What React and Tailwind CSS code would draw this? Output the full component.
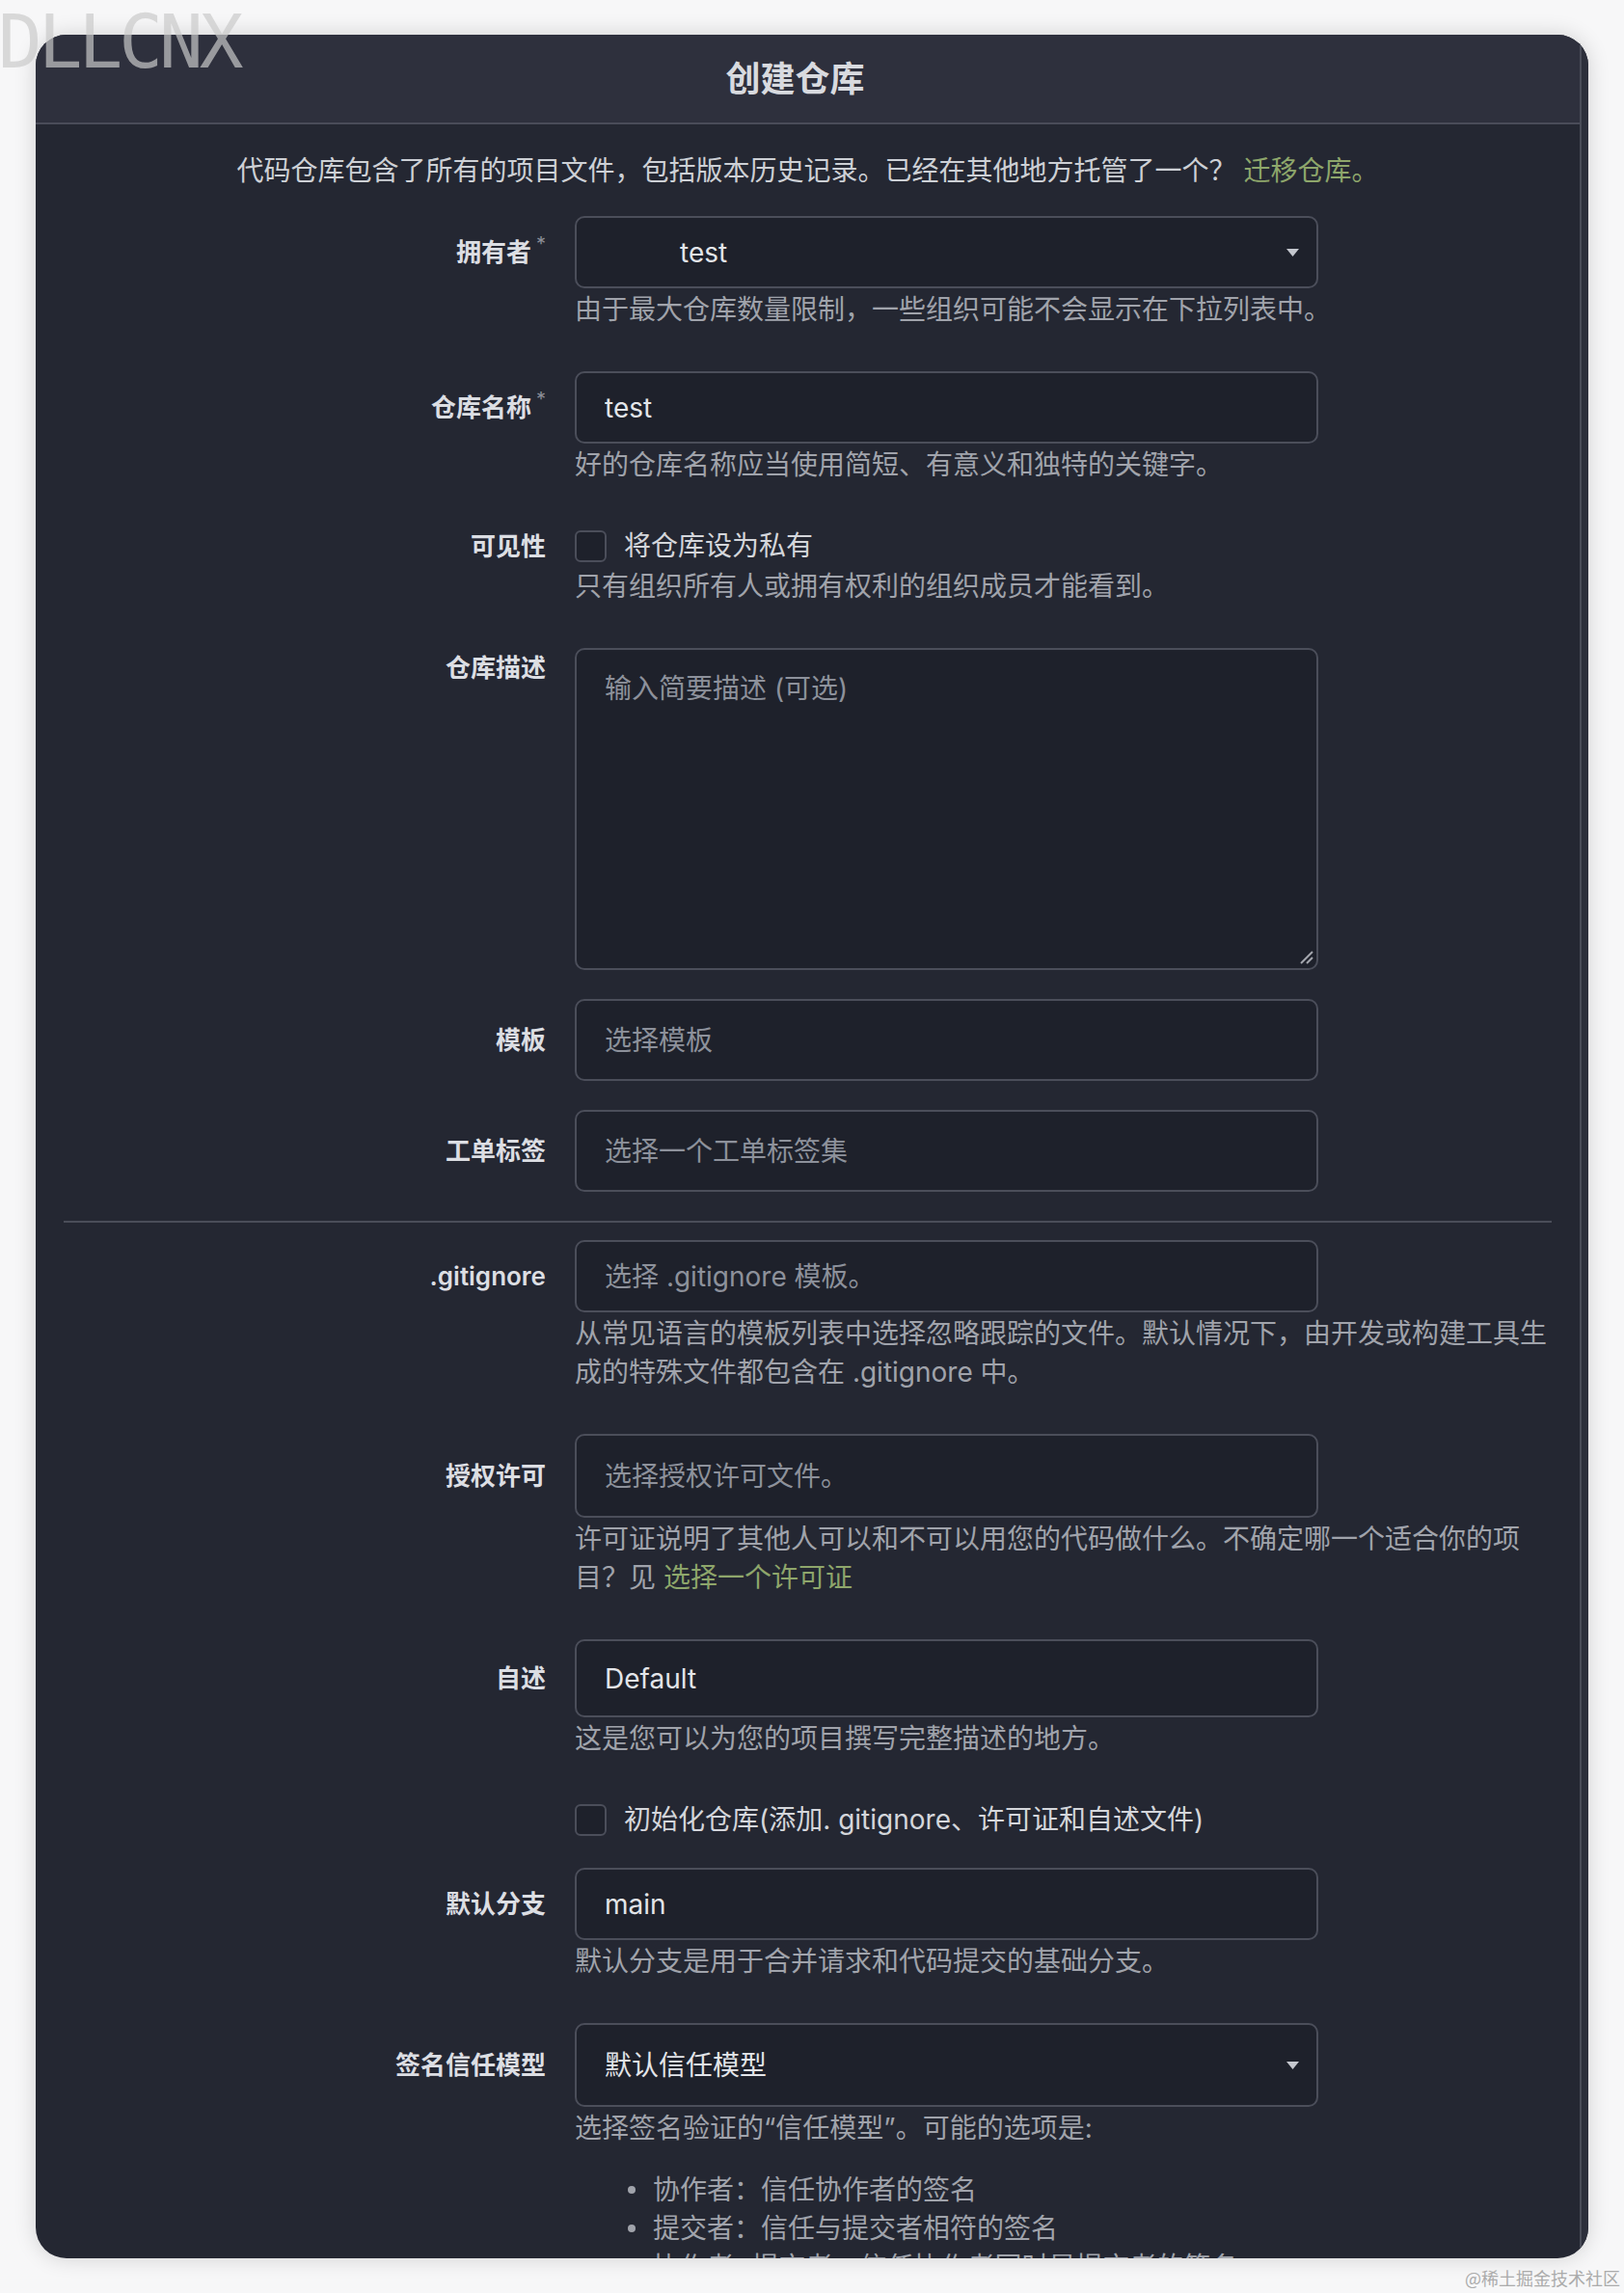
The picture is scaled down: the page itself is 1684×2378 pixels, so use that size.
import React from "react";

const field =
  "flex w-[771px] items-center rounded-[10px] border-2 border-[#4b4e5a] bg-[#1e212b] pl-[29px]";

function Caret() {
  return (
    <svg width="13" height="8" viewBox="0 0 13 8" className="ml-auto mr-[18px] shrink-0">
      <path d="M0 0h13L6.5 8z" fill="#c4c7ce" />
    </svg>
  );
}

function Label({ children, required, h = "h-[75px]" }) {
  return (
    <div className={`flex items-center justify-end text-[26px] font-semibold text-[#dcdee3] ${h}`}>
      <span>{children}</span>
      {required && (
        <span className="mb-[18px] ml-[5px] text-[20px] leading-none font-normal text-[#8b8e97]">*</span>
      )}
    </div>
  );
}

function Help({ children }) {
  return <p className="mt-[2px] mb-[14px] leading-[40px] text-[#a0a3ab]">{children}</p>;
}

function Row({ label, required, labelH, children }) {
  return (
    <div className="mb-[30px] grid grid-cols-[500px_1fr] gap-x-[30px]">
      <Label required={required} h={labelH}>
        {label}
      </Label>
      <div>{children}</div>
    </div>
  );
}

function Checkbox() {
  return <span className="h-[33px] w-[33px] shrink-0 rounded-[6px] border-2 border-[#4b4e5a] bg-[#1e212b]" />;
}

export default function App() {
  return (
    <div className="relative min-h-[2378px] bg-[#f7f7f8] pt-[36px] font-['Inter','Noto_Sans_CJK_SC',sans-serif] text-[28px]">
      <div className="absolute top-[6px] left-[-2px] z-10 font-['DejaVu_Sans_Mono',monospace] text-[76px] leading-none tracking-[-4px] text-[rgba(201,201,201,0.69)] select-none">
        DLLCNX
      </div>

      <div className="mx-auto flex h-[2306px] w-[1610px] overflow-hidden rounded-[32px] bg-[#242732] shadow-[0_0_22px_rgba(0,0,0,0.16)]">
        <div className="flex-1">
          <header className="flex h-[93px] items-center justify-center border-b-2 border-[#4a4c59] bg-[#2e303d] pr-[26px]">
            <h1 className="text-[36px] font-semibold text-[#d8dadf]">创建仓库</h1>
          </header>

          <div className="px-[29px] pt-[28px]">
            <p className="mb-[27px] text-center leading-[40px] text-[#cdd0d5]">
              代码仓库包含了所有的项目文件，包括版本历史记录。已经在其他地方托管了一个？{" "}
              <a className="text-[#8ea66b]">迁移仓库。</a>
            </p>

            <Row label="拥有者" required>
              <div className={`${field} h-[75px] pl-[107px] text-[#e3e5e9]`}>
                test
                <Caret />
              </div>
              <Help>由于最大仓库数量限制，一些组织可能不会显示在下拉列表中。</Help>
            </Row>

            <Row label="仓库名称" required>
              <input
                readOnly
                value="test"
                className={`${field} h-[75px] text-[#e3e5e9] outline-none`}
              />
              <Help>好的仓库名称应当使用简短、有意义和独特的关键字。</Help>
            </Row>

            <div className="grid grid-cols-[500px_1fr] gap-x-[30px]">
              <Label h="h-[40px]">可见性</Label>
              <div>
                <label className="flex h-[40px] items-center gap-[18px] text-[#d4d6db]">
                  <Checkbox />
                  将仓库设为私有
                </label>
                <Help>只有组织所有人或拥有权利的组织成员才能看到。</Help>
              </div>
            </div>
            <div className="mb-[30px]" />

            <Row label="仓库描述" labelH="h-[40px]">
              <div className={`${field} relative h-[334px] items-start pt-[20px] leading-[40px] text-[#8d919b]`}>
                输入简要描述 (可选)
                <svg width="14" height="14" viewBox="0 0 14 14" className="absolute right-[3px] bottom-[4px]">
                  <path d="M1 13L13 1M7 13L13 7" stroke="#a3a6ad" strokeWidth="2" />
                </svg>
              </div>
            </Row>

            <Row label="模板" labelH="h-[85px]">
              <div className={`${field} h-[85px] text-[#8d919b]`}>选择模板</div>
            </Row>

            <Row label="工单标签" labelH="h-[85px]">
              <div className={`${field} h-[85px] text-[#8d919b]`}>选择一个工单标签集</div>
            </Row>

            <div className="mt-[2px] mb-[18px] h-[2px] bg-[#4a4d59]" />

            <Row label=".gitignore">
              <div className={`${field} h-[75px] text-[#8d919b]`}>选择 .gitignore 模板。</div>
              <Help>
                从常见语言的模板列表中选择忽略跟踪的文件。默认情况下，由开发或构建工具生成的特殊文件都包含在 .gitignore 中。
              </Help>
            </Row>

            <Row label="授权许可" labelH="h-[87px]">
              <div className={`${field} h-[87px] text-[#8d919b]`}>选择授权许可文件。</div>
              <Help>
                许可证说明了其他人可以和不可以用您的代码做什么。不确定哪一个适合你的项目？见{" "}
                <a className="text-[#8ea66b]">选择一个许可证</a>
              </Help>
            </Row>

            <Row label="自述" labelH="h-[81px]">
              <div className={`${field} h-[81px] text-[#e3e5e9]`}>Default</div>
              <Help>这是您可以为您的项目撰写完整描述的地方。</Help>
            </Row>

            <div className="mb-[30px] grid grid-cols-[500px_1fr] gap-x-[30px]">
              <div />
              <label className="flex h-[40px] items-center gap-[18px] text-[#d4d6db]">
                <Checkbox />
                初始化仓库(添加. gitignore、许可证和自述文件)
              </label>
            </div>

            <Row label="默认分支">
              <input
                readOnly
                value="main"
                className={`${field} h-[75px] text-[#e3e5e9] outline-none`}
              />
              <Help>默认分支是用于合并请求和代码提交的基础分支。</Help>
            </Row>

            <div className="grid grid-cols-[500px_1fr] gap-x-[30px]">
              <Label h="h-[87px]">签名信任模型</Label>
              <div>
                <div className={`${field} h-[87px] text-[#e3e5e9]`}>
                  默认信任模型
                  <Caret />
                </div>
                <p className="mt-[2px] leading-[40px] text-[#a0a3ab]">
                  选择签名验证的“信任模型”。可能的选项是:
                </p>
                <ul className="mt-[24px] pl-[55px] leading-[40px] text-[#a0a3ab]">
                  {[
                    "协作者：信任协作者的签名",
                    "提交者：信任与提交者相符的签名",
                    "协作者+提交者：信任协作者同时是提交者的签名",
                  ].map((t) => (
                    <li key={t} className="flex h-[40px] items-center">
                      <span className="mr-[18px] h-[8px] w-[8px] rounded-full bg-[#a0a3ab]" />
                      {t}
                    </li>
                  ))}
                </ul>
              </div>
            </div>
          </div>
        </div>
        <div className="w-[9px] border-l-2 border-[#4a4d59] bg-[#2c2f3b]" />
      </div>

      <div className="absolute top-[2350px] right-[4px] font-['Noto_Sans_CJK_SC',sans-serif] text-[18px] leading-[24px] text-[#ababab]">
        @稀土掘金技术社区
      </div>
    </div>
  );
}
